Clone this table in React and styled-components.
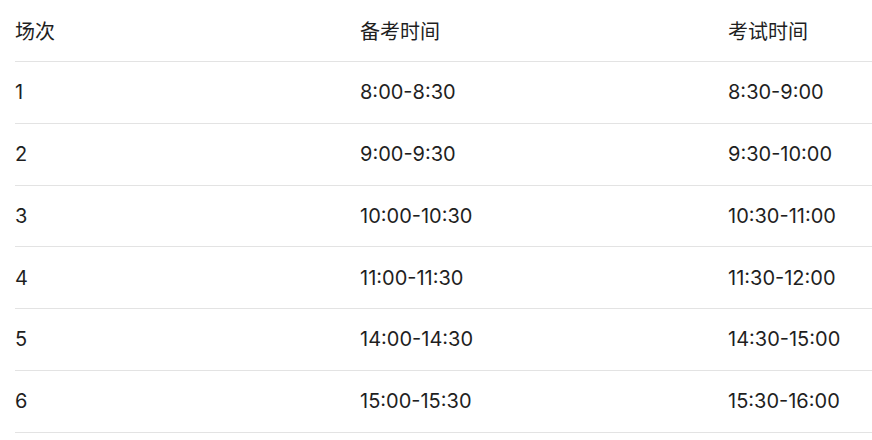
import React from "react";
import styled, { createGlobalStyle } from "styled-components";

const Global = createGlobalStyle`
  html, body { margin: 0; padding: 0; background: #ffffff; }
  body { font-family: Inter, "Noto Sans CJK SC", sans-serif; }
`;

const Table = styled.div`
  padding-left: 15px;
  display: grid;
  grid-template-columns: 345px 368px 1fr;
`;

const Cell = styled.div`
  box-sizing: border-box;
  height: ${(p) => (p.$head ? "62px" : "61.75px")};
  border-bottom: 1px solid #e3e3e3;
  display: flex;
  align-items: center;
  font-size: 20px;
  color: #1f1f1f;
  white-space: nowrap;
`;

const rows = [
  ["1", "8:00-8:30", "8:30-9:00"],
  ["2", "9:00-9:30", "9:30-10:00"],
  ["3", "10:00-10:30", "10:30-11:00"],
  ["4", "11:00-11:30", "11:30-12:00"],
  ["5", "14:00-14:30", "14:30-15:00"],
  ["6", "15:00-15:30", "15:30-16:00"],
];

export default function App() {
  return (
    <>
      <Global />
      <Table>
        {["场次", "备考时间", "考试时间"].map((h) => (
          <Cell key={h} $head>{h}</Cell>
        ))}
        {rows.map((r) =>
          r.map((c, i) => <Cell key={r[0] + "-" + i}>{c}</Cell>)
        )}
      </Table>
    </>
  );
}
